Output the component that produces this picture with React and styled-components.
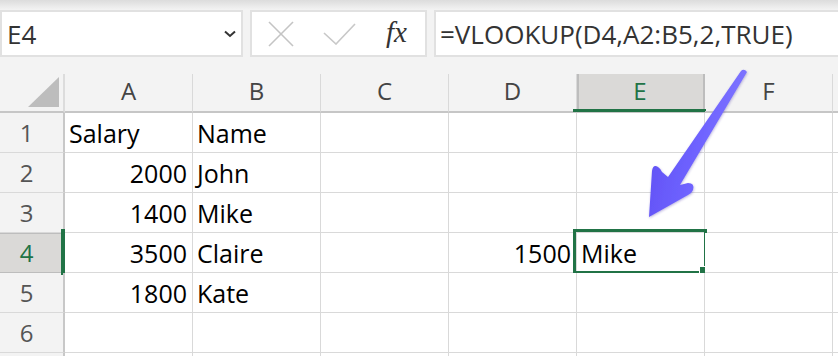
import React from "react";
import styled, { createGlobalStyle, css } from "styled-components";

const GlobalStyle = createGlobalStyle`
  html, body { margin: 0; padding: 0; background: #f3f3f3; }
  body { font-family: "Open Sans", "Liberation Sans", sans-serif; }
`;

const GREEN = "#217346";
const GRID = "#d9d9d9";

const Page = styled.div`
  position: relative;
  width: 838px;
  height: 356px;
  overflow: hidden;
  background: #f3f3f3;
`;

const Toolbar = styled.div`
  display: flex;
  gap: 7px;
  height: 57px;
  padding-top: 10px;
  box-sizing: border-box;
  width: 850px;
  background: linear-gradient(to bottom, #dcdcdc 0px, #f1f1f1 9px, #f3f3f3 10px);
`;

const Box = styled.div`
  display: flex;
  align-items: center;
  box-sizing: border-box;
  height: 47px;
  background: #fff;
  border: 2px solid #e1e1e1;
`;

const NameBox = styled(Box)`
  width: 243px;
  padding: 0 5px 0 5px;
  justify-content: space-between;
`;

const FxBox = styled(Box)`
  width: 177px;
  padding-left: 16px;
`;

const FormulaBox = styled(Box)`
  flex: 1;
  padding-left: 4px;
`;

const BarText = styled.span`
  font-family: "Open Sans", sans-serif;
  font-size: 26px;
  color: #333;
  line-height: 1;
  white-space: nowrap;
`;

const IconSlot = styled.span`
  display: flex;
  align-items: center;
  margin-left: ${(p) => p.$gap || 0}px;
`;

const FxText = styled.span`
  margin-left: 30px;
  font-family: "Liberation Serif", "DejaVu Serif", serif;
  font-style: italic;
  font-size: 29px;
  color: #333;
  line-height: 1;
  position: relative;
  top: -1px;
`;

const Sheet = styled.div`
  margin-top: 17px;
  display: grid;
  grid-template-columns: 65px repeat(7, 128px);
  grid-template-rows: 39px;
  grid-auto-rows: 40px;
  width: max-content;
`;

const Corner = styled.div`
  box-sizing: border-box;
  border-right: 2px solid #dcdcdc;
  border-bottom: 2px solid #c6c6c6;
  display: flex;
  align-items: flex-end;
  justify-content: flex-end;
  padding: 0 4px 4px 0;
`;

const ColHeader = styled.div`
  position: relative;
  box-sizing: border-box;
  display: flex;
  align-items: center;
  justify-content: center;
  padding-bottom: 4px;
  border-right: 1px solid ${GRID};
  border-bottom: 2px solid #c6c6c6;
  font-family: "Open Sans", sans-serif;
  font-size: 24px;
  color: #444;
  ${(p) =>
    p.$active &&
    css`
      background: #dad9d7;
      color: ${GREEN};
      border-right: 2px solid #bdbdbd;
      box-shadow: inset 2px 0 0 #bdbdbd;
      &::after {
        content: "";
        position: absolute;
        left: -4px;
        right: -3px;
        bottom: -1px;
        height: 3px;
        background: ${GREEN};
      }
    `}
`;

const RowHeader = styled.div`
  position: relative;
  box-sizing: border-box;
  display: flex;
  align-items: center;
  justify-content: center;
  padding-right: 10px;
  border-right: 2px solid #c8c8c8;
  border-bottom: 1px solid ${GRID};
  font-family: "Open Sans", sans-serif;
  font-size: 24px;
  color: #555;
  ${(p) =>
    p.$active &&
    css`
      background: #dad9d7;
      color: ${GREEN};
      border-bottom-color: #bdbdbd;
      box-shadow: inset 0 1px 0 #bdbdbd;
      &::after {
        content: "";
        position: absolute;
        right: -2px;
        top: -4px;
        bottom: -3px;
        width: 4px;
        background: ${GREEN};
      }
    `}
`;

const Cell = styled.div`
  position: relative;
  box-sizing: border-box;
  display: flex;
  align-items: center;
  justify-content: ${(p) => (p.$num ? "flex-end" : "flex-start")};
  padding: 0 5px 0 4px;
  background: #fff;
  border-right: 1px solid ${GRID};
  border-bottom: 1px solid ${GRID};
  font-family: "Open Sans", sans-serif;
  font-size: 25px;
  color: #000;
  white-space: nowrap;
`;

const Selection = styled.div`
  position: absolute;
  left: -4px;
  top: -4px;
  width: 134px;
  height: 45px;
  box-sizing: border-box;
  border: 3px solid ${GREEN};
  pointer-events: none;
`;

const FillHandle = styled.div`
  position: absolute;
  right: -4px;
  bottom: -4px;
  width: 8px;
  height: 8px;
  background: ${GREEN};
  box-shadow: 0 0 0 1px #fff;
`;

const ArrowLayer = styled.svg`
  position: absolute;
  left: 0;
  top: 0;
  pointer-events: none;
`;

// The 7th column (G) and 7th row peek in at the edges but their labels are not visible.
const cols = ["A", "B", "C", "D", "E", "F", ""];

const rows = [
  ["Salary", "Name", "", "", "", "", ""],
  [2000, "John", "", "", "", "", ""],
  [1400, "Mike", "", "", "", "", ""],
  [3500, "Claire", "", 1500, "Mike", "", ""],
  [1800, "Kate", "", "", "", "", ""],
  ["", "", "", "", "", "", ""],
  ["", "", "", "", "", "", ""],
];

export default function App() {
  return (
    <>
      <GlobalStyle />
      <Page>
        <Toolbar>
          <NameBox>
            <BarText>E4</BarText>
            <svg width="12" height="8" viewBox="0 0 12 8">
              <polyline points="1,1.5 6,6 11,1.5" fill="none" stroke="#333" strokeWidth="2" />
            </svg>
          </NameBox>
          <FxBox>
            <IconSlot>
              <svg width="26" height="26" viewBox="0 0 26 26">
                <line x1="1" y1="1" x2="25" y2="25" stroke="#c4c4c4" strokeWidth="1.6" />
                <line x1="25" y1="1" x2="1" y2="25" stroke="#c4c4c4" strokeWidth="1.6" />
              </svg>
            </IconSlot>
            <IconSlot $gap={29}>
              <svg width="33" height="22" viewBox="0 0 33 22">
                <polyline points="1,10 13,21 32,1" fill="none" stroke="#c8c8c8" strokeWidth="1.6" />
              </svg>
            </IconSlot>
            <FxText>fx</FxText>
          </FxBox>
          <FormulaBox>
            <BarText>=VLOOKUP(D4,A2:B5,2,TRUE)</BarText>
          </FormulaBox>
        </Toolbar>
        <Sheet>
          <Corner>
            <svg width="31" height="30" viewBox="0 0 31 30">
              <polygon points="0,30 31,30 31,0" fill="#bdbdbd" />
            </svg>
          </Corner>
          {cols.map((c, i) => (
            <ColHeader key={i} $active={c === "E"}>
              {c}
            </ColHeader>
          ))}
          {rows.map((r, ri) => (
            <React.Fragment key={ri}>
              <RowHeader $active={ri === 3}>{ri < 6 ? ri + 1 : ""}</RowHeader>
              {r.map((v, ci) => (
                <Cell key={ci} $num={typeof v === "number"}>
                  {v}
                  {ri === 3 && ci === 4 && (
                    <Selection>
                      <FillHandle />
                    </Selection>
                  )}
                </Cell>
              ))}
            </React.Fragment>
          ))}
        </Sheet>
        <ArrowLayer width="838" height="356" viewBox="0 0 838 356">
          <defs>
            <linearGradient id="arrowGrad" x1="0" y1="0" x2="1" y2="0.3">
              <stop offset="0" stopColor="#5d4df2" />
              <stop offset="0.6" stopColor="#6f63ff" />
              <stop offset="1" stopColor="#7f76ff" />
            </linearGradient>
            <filter id="arrowShadow" x="-20%" y="-20%" width="140%" height="140%">
              <feDropShadow dx="0.5" dy="1" stdDeviation="1" floodColor="#3a2fa0" floodOpacity="0.35" />
            </filter>
          </defs>
          <path
            d="M 741 71 Q 744 68 747 72 L 680 185 L 688 183 Q 695 183 693 190 Q 692 193 688 195 L 649 217 L 652 171 Q 653 164 658 167 Q 661 169 662 172 L 668 177 Z"
            fill="url(#arrowGrad)"
            filter="url(#arrowShadow)"
            strokeLinejoin="round"
          />
        </ArrowLayer>
      </Page>
    </>
  );
}
